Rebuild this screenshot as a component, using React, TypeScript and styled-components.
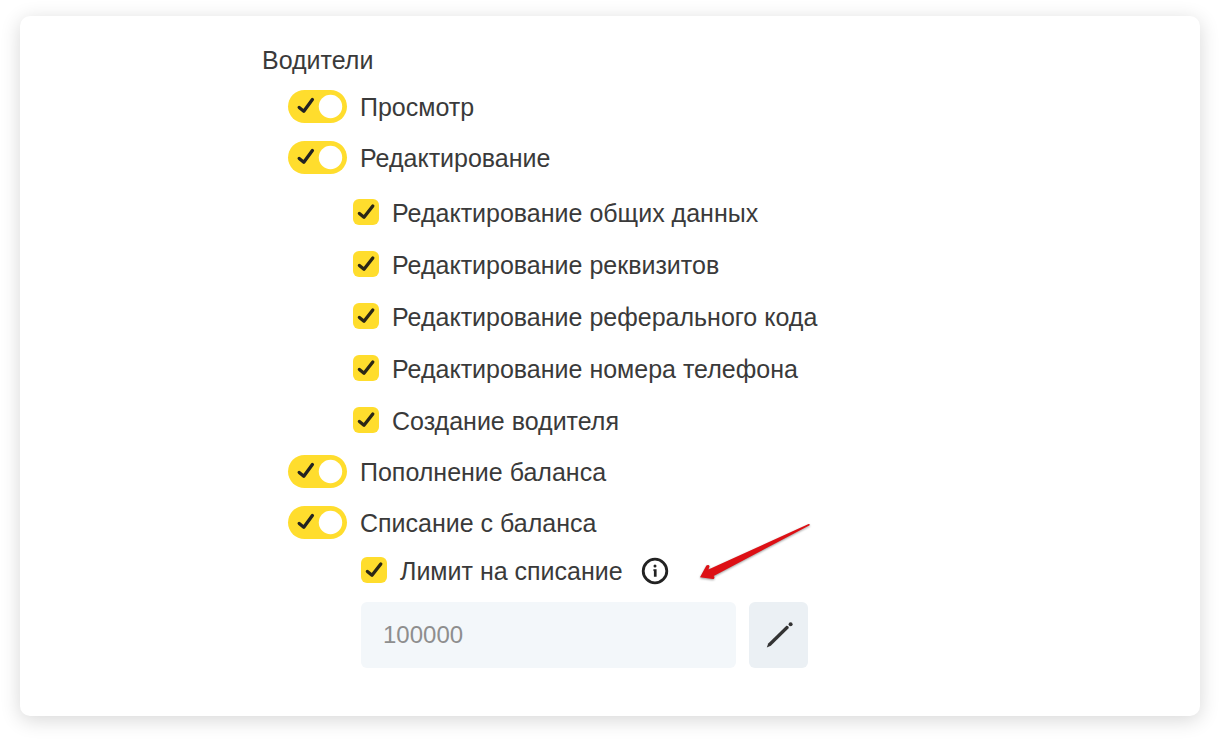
import React from "react";
import styled, { createGlobalStyle } from "styled-components";

const GlobalStyle = createGlobalStyle`
  * { box-sizing: border-box; }
  body {
    margin: 0;
    background: #fff;
    color: #3a3a3a;
    font-family: "Liberation Sans", Arial, sans-serif;
    font-size: 25px;
    line-height: 28px;
  }
`;

const Page = styled.main`
  padding: 16px 20px 24px;
`;

const Card = styled.section`
  padding: 30px 24px 48px;
  border-radius: 10px;
  background: #fff;
  box-shadow: 0 4px 20px rgba(0, 0, 0, 0.16);
`;

const Group = styled.fieldset`
  max-width: 696px;
  min-width: 0;
  margin: 0 auto;
  padding: 0;
  border: 0;
`;

const Title = styled.legend`
  padding: 0;
  margin-bottom: 7px;
`;

const ToggleRow = styled.label`
  display: flex;
  align-items: center;
  gap: 13px;
  height: 51px;
  margin-left: 26px;
  cursor: pointer;
`;

const Control = styled.span`
  display: grid;
  flex: none;
  > * { grid-area: 1 / 1; }
  > svg { pointer-events: none; }
  > input:not(:checked) + svg { opacity: 0.3; }
`;

const ToggleInput = styled.input`
  appearance: none;
  width: 59px;
  height: 33px;
  margin: 0;
  border-radius: 17px;
  background: #ffdd2d;
`;

const CheckInput = styled.input`
  appearance: none;
  width: 26px;
  height: 26px;
  margin: 0;
  border-radius: 6px;
  background: #ffdd2d;
`;

const CheckList = styled.ul`
  margin: 0 0 -1px;
  padding: 4px 0 0 91px;
  list-style: none;
`;

const CheckRow = styled.label<{ $compact?: boolean }>`
  display: flex;
  align-items: center;
  gap: 13px;
  height: ${(p) => (p.$compact ? 46 : 52)}px;
  cursor: pointer;

  ${Control} {
    margin-bottom: 2px;
  }
`;

const Limit = styled.div`
  position: relative;
  display: flex;
  align-items: center;
  gap: 18px;
  margin-left: 99px;
`;

const IconButton = styled.button`
  display: grid;
  place-items: center;
  padding: 0;
  border: 0;
  background: none;
  color: #222;
  cursor: pointer;
`;

const Arrow = styled.svg`
  position: absolute;
  left: 336px;
  top: -28px;
  filter: drop-shadow(0 1px 1px rgba(0, 0, 0, 0.4));
`;

const AmountRow = styled.div`
  display: flex;
  gap: 13px;
  max-width: 546px;
  margin-top: 8px;
  padding-left: 99px;
`;

const AmountInput = styled.input`
  flex: 1;
  min-width: 0;
  height: 66px;
  padding: 0 22px;
  border: 0;
  border-radius: 6px;
  background: #f3f7fa;
  color: #8e8e8e;
  font: inherit;
  font-size: 24px;
`;

const EditButton = styled(IconButton)`
  width: 59px;
  height: 66px;
  border-radius: 6px;
  background: #ebf0f4;
`;

function Toggle({ label }: { label: string }) {
  return (
    <ToggleRow>
      <Control>
        <ToggleInput type="checkbox" role="switch" defaultChecked />
        <svg width="59" height="33" viewBox="0 0 59 33" fill="none" aria-hidden="true">
          <path d="M11.2 17.4 15.8 21.2 24.4 9.6" stroke="#222" strokeWidth="3.3" strokeLinecap="round" strokeLinejoin="round" />
          <circle cx="42.5" cy="16.5" r="11.7" fill="#fff" />
        </svg>
      </Control>
      {label}
    </ToggleRow>
  );
}

function Check({ label, compact }: { label: string; compact?: boolean }) {
  return (
    <CheckRow $compact={compact}>
      <Control>
        <CheckInput type="checkbox" defaultChecked />
        <svg width="26" height="26" viewBox="0 0 26 26" fill="none" aria-hidden="true">
          <path d="M6.4 14.4 11 18.3 19.8 7" stroke="#2b2716" strokeWidth="3.3" strokeLinecap="round" strokeLinejoin="round" />
        </svg>
      </Control>
      {label}
    </CheckRow>
  );
}

const editPermissions = [
  "Редактирование общих данных",
  "Редактирование реквизитов",
  "Редактирование реферального кода",
  "Редактирование номера телефона",
  "Создание водителя",
];

export default function App() {
  return (
    <>
      <GlobalStyle />
      <Page>
        <Card>
          <Group>
            <Title>Водители</Title>
            <Toggle label="Просмотр" />
            <Toggle label="Редактирование" />
            <CheckList>
              {editPermissions.map((name) => (
                <li key={name}>
                  <Check label={name} />
                </li>
              ))}
            </CheckList>
            <Toggle label="Пополнение баланса" />
            <Toggle label="Списание с баланса" />
            <Limit>
              <Check label="Лимит на списание" compact />
              <IconButton type="button" aria-label="Подробнее о лимите">
                <svg width="28" height="28" viewBox="0 0 28 28" fill="none" aria-hidden="true">
                  <circle cx="14" cy="14" r="11.8" stroke="currentColor" strokeWidth="2.8" />
                  <circle cx="14" cy="9" r="1.5" fill="currentColor" />
                  <path d="M12.4 12.2H15.6V19.8H12.9V14.2L12.4 13.7Z" fill="currentColor" />
                </svg>
              </IconButton>
              <Arrow width="116" height="62" viewBox="0 0 116 62" aria-hidden="true">
                <path d="M3 57.2 9.4 45.6C10.6 44.2 12.8 45 12.5 46.6L11.4 49.4 111.6 4C112.7 3.7 113.3 4.9 112.2 5.6L18.6 55 16.6 56.1C18 56.6 17.6 58.9 16 59Z" fill="#dd1015" />
              </Arrow>
            </Limit>
            <AmountRow>
              <AmountInput type="text" inputMode="numeric" aria-label="Лимит на списание" defaultValue="100000" />
              <EditButton type="button" aria-label="Изменить">
                <svg width="28" height="28" viewBox="0 0 28 28" fill="none" aria-hidden="true">
                  <path d="M1.8 26.6 3.2 22.6 21.4 4.8Q23.6 4.6 23.9 6.9L5.8 24.8Z" fill="#333" />
                  <circle cx="25.6" cy="3.2" r="2" fill="#333" />
                </svg>
              </EditButton>
            </AmountRow>
          </Group>
        </Card>
      </Page>
    </>
  );
}
